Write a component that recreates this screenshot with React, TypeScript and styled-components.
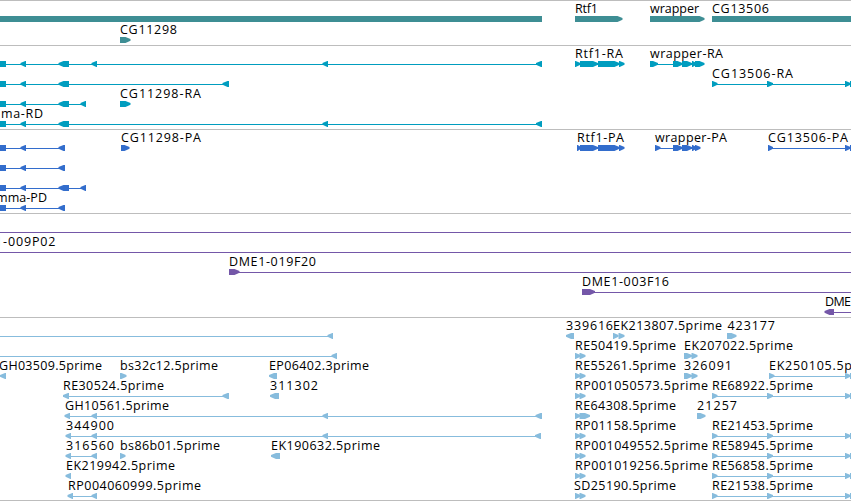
import React from "react";
import styled, { createGlobalStyle } from "styled-components";

const GlobalStyle = createGlobalStyle`
  body {
    margin: 0;
    background: #fff;
    overflow: hidden;
  }
`;

const Browser = styled.main`
  display: flex;
  flex-direction: column;
  width: 851px;
  height: 500px;
  border-bottom: 1px solid #bdbdbd;
  overflow: hidden;
`;

const Track = styled.section<{ $height: number; $color: string }>`
  box-sizing: border-box;
  flex: none;
  display: flex;
  flex-direction: column;
  height: ${(p) => p.$height}px;
  padding-top: 3px;
  border-top: 1px solid #bdbdbd;
  color: ${(p) => p.$color};
`;

const Lane = styled.svg<{ $height: number }>`
  display: block;
  flex: none;
  width: 851px;
  height: ${(p) => p.$height}px;
  overflow: visible;
  fill: currentColor;
`;

const Label = styled.text`
  font-family: "Open Sans", "Noto Sans", sans-serif;
  font-size: 12.5px;
  fill: #000;
  white-space: pre;
`;

type Kind = "L" | "R" | "B";
type Glyph = [Kind, number, number];
type Name = [string, number, number];
interface Row {
  names?: Name[];
  lines?: [number, number][];
  glyphs?: Glyph[];
}
interface TrackData {
  id: string;
  color: string;
  height: number;
  firstLane?: number;
  rows: Row[];
}

const TOP = 12;
const BOTTOM = 18;
const MID = 15;
const TIP_TOP = MID - 1;
const TIP_BOTTOM = MID + 0.8;

function shape([kind, a, b]: Glyph): string {
  const tip = Math.min(5, b - a - 0.7);
  if (kind === "L") {
    return `M${a} ${TIP_BOTTOM}V${TIP_TOP}L${a + tip} ${TOP}H${b}V${BOTTOM}H${a + tip}Z`;
  }
  if (kind === "R") {
    return `M${b} ${TIP_BOTTOM}V${TIP_TOP}L${b - tip} ${TOP}H${a}V${BOTTOM}H${b - tip}Z`;
  }
  return `M${a} ${TOP}H${b}V${BOTTOM}H${a}Z`;
}

const edge: Glyph[] = [["B", 0, 6], ["L", 20.5, 26]];
const exonPair: Glyph[] = [["R", 575, 580.5], ["R", 579.5, 585.5]];
const cgExons: Glyph[] = [["R", 712, 717.5], ["R", 767, 773], ["R", 845, 850.5], ["B", 850, 851]];

const tracks: TrackData[] = [
  {
    id: "genes", color: "#3e8e94", height: 45, firstLane: 21,
    rows: [
      {
        names: [["Rtf1", 575, 598], ["wrapper", 650, 699], ["CG13506", 712, 769]],
        glyphs: [["B", 0, 542], ["R", 575, 622.5], ["R", 650, 704.5], ["B", 712, 851]],
      },
      { names: [["CG11298", 120, 177]], glyphs: [["R", 120, 130.5]] },
    ],
  },
  {
    id: "transcripts", color: "#009dbf", height: 84,
    rows: [
      {
        names: [["Rtf1-RA", 575, 623], ["wrapper-RA", 650, 723]],
        lines: [[0, 542], [575, 624], [650, 704]],
        glyphs: [...edge, ["L", 58.5, 69], ["L", 91.5, 97], ["L", 322.5, 328], ["L", 536, 542],
          ["R", 575, 580.5], ["R", 580, 598], ["R", 598, 619.5], ["R", 619, 624.5],
          ["R", 650, 658], ["R", 673, 682.5], ["R", 682, 692], ["R", 692, 696.5], ["R", 695, 704.5]],
      },
      {
        names: [["CG13506-RA", 712, 793]],
        lines: [[0, 229], [712, 851]],
        glyphs: [...edge, ["L", 58.5, 69], ["L", 222.5, 229], ...cgExons],
      },
      {
        names: [["CG11298-RA", 120, 201]],
        lines: [[0, 86]],
        glyphs: [...edge, ["L", 58.5, 69], ["L", 80.5, 86], ["R", 120, 130.5]],
      },
      {
        names: [["ma-RD", 1, 43]],
        lines: [[0, 542]],
        glyphs: [...edge, ["L", 58.5, 69], ["L", 322.5, 328], ["L", 536, 542]],
      },
    ],
  },
  {
    id: "proteins", color: "#336dcc", height: 84,
    rows: [
      {
        names: [["CG11298-PA", 121, 201], ["Rtf1-PA", 577, 624], ["wrapper-PA", 655, 727], ["CG13506-PA", 768, 848]],
        lines: [[0, 65], [577, 624], [655, 700], [768, 851]],
        glyphs: [...edge, ["L", 58.5, 65], ["R", 121, 129.5],
          ["R", 577, 581], ["R", 580, 598], ["R", 598, 619.5], ["R", 619, 624.5],
          ["R", 655, 660.5], ["R", 673, 682.5], ["R", 682, 692], ["R", 692, 696.5], ["R", 695, 700.5],
          ["R", 768, 773], ["R", 845, 850.5], ["B", 850, 851]],
      },
      { lines: [[0, 65]], glyphs: [...edge, ["L", 58.5, 65]] },
      { lines: [[0, 86]], glyphs: [...edge, ["L", 58.5, 69], ["L", 80.5, 86]] },
      {
        names: [["mma-PD", -4, 47]],
        lines: [[0, 65]],
        glyphs: [...edge, ["L", 58.5, 65]],
      },
    ],
  },
  {
    id: "clones", color: "#7457a8", height: 104,
    rows: [
      { lines: [[0, 851]] },
      { names: [["1-009P02", -5, 55.5]], lines: [[0, 851]] },
      { names: [["DME1-019F20", 229, 316]], lines: [[229, 851]], glyphs: [["R", 229, 239.5]] },
      { names: [["DME1-003F16", 582, 669]], lines: [[582, 851]], glyphs: [["R", 582, 595]] },
      { names: [["DME", 825, 851]], lines: [[825, 851]], glyphs: [["L", 824.5, 834]] },
    ],
  },
  {
    id: "ests", color: "#87bcdd", height: 183,
    rows: [
      {
        names: [["339616", 566, 613], ["EK213807.5prime", 613, 722], ["423177", 727.5, 775]],
        lines: [[0, 333]],
        glyphs: [["L", 327.5, 333], ["L", 566, 574], ["R", 613, 618.5], ["R", 618.5, 624.5], ["R", 727, 736.5]],
      },
      {
        names: [["RE50419.5prime", 575, 676], ["EK207022.5prime", 684, 793]],
        lines: [[0, 337]],
        glyphs: [["L", 331.5, 337], ...exonPair, ["R", 684, 692], ["R", 691.5, 697.5]],
      },
      {
        names: [["GH03509.5prime", -1, 102], ["bs32c12.5prime", 120, 218], ["EP06402.3prime", 269, 369],
          ["RE55261.5prime", 575, 676], ["326091", 684, 732], ["EK250105.5p", 769, 852]],
        lines: [[769, 851]],
        glyphs: [["L", 0, 6], ["R", 120, 126.5], ["L", 269, 277], ...exonPair, ["R", 684, 692], ["R", 691.5, 697.5],
          ["R", 769, 774.5], ["R", 845, 850.5], ["B", 850, 851]],
      },
      {
        names: [["RE30524.5prime", 63, 164], ["311302", 270, 318], ["RP001050573.5prime", 575, 708], ["RE68922.5prime", 712, 813]],
        lines: [[63, 229], [712, 851]],
        glyphs: [["L", 63, 69], ["L", 222.5, 229], ["L", 270, 279], ...exonPair, ...cgExons],
      },
      {
        names: [["GH10561.5prime", 65, 169], ["RE64308.5prime", 575, 676], ["21257", 697, 737]],
        lines: [[65, 542]],
        glyphs: [["L", 64.5, 70], ["L", 91.5, 97], ["L", 322.5, 328], ["L", 535.5, 542],
          ["R", 575, 580.5], ["R", 579.5, 590], ["R", 697, 705.5]],
      },
      {
        names: [["344900", 66, 114], ["RP01158.5prime", 575, 676], ["RE21453.5prime", 712, 813]],
        lines: [[66, 541], [712, 851]],
        glyphs: [["L", 65.5, 71], ["L", 91.5, 97], ["L", 322.5, 328], ["L", 535, 541], ...exonPair, ...cgExons],
      },
      {
        names: [["316560", 66, 114], ["bs86b01.5prime", 120, 220], ["EK190632.5prime", 271, 380],
          ["RP001049552.5prime", 575, 708], ["RE58945.5prime", 712, 813]],
        lines: [[66, 97], [712, 851]],
        glyphs: [["L", 65.5, 71], ["L", 91.5, 97], ["R", 120, 125.5], ["L", 271, 280], ...exonPair, ...cgExons],
      },
      {
        names: [["EK219942.5prime", 66, 175], ["RP001019256.5prime", 575, 708], ["RE56858.5prime", 712, 813]],
        lines: [[712, 851]],
        glyphs: [["L", 65.5, 71], ...exonPair, ...cgExons],
      },
      {
        names: [["RP004060999.5prime", 68, 201], ["SD25190.5prime", 574, 676], ["RE21538.5prime", 712, 813]],
        lines: [[68, 97], [712, 851]],
        glyphs: [["L", 67.5, 73], ["L", 91.5, 97], ...exonPair, ...cgExons],
      },
    ],
  },
];

function FeatureLane({ row, height }: { row: Row; height: number }) {
  return (
    <Lane $height={height}>
      {row.lines?.map(([a, b], i) => (
        <rect key={i} x={a} y={MID} width={b - a} height={1} />
      ))}
      {row.glyphs?.map((g, i) => (
        <path key={i} d={shape(g)} />
      ))}
      {row.names?.map(([text, a, b]) => (
        <Label key={text} x={a} y={9} textLength={b - a} lengthAdjust="spacing">
          {text}
        </Label>
      ))}
    </Lane>
  );
}

export default function App() {
  return (
    <>
      <GlobalStyle />
      <Browser>
        {tracks.map((t) => (
          <Track key={t.id} $height={t.height} $color={t.color}>
            {t.rows.map((row, i) => (
              <FeatureLane key={i} row={row} height={i === 0 && t.firstLane ? t.firstLane : 20} />
            ))}
          </Track>
        ))}
      </Browser>
    </>
  );
}
